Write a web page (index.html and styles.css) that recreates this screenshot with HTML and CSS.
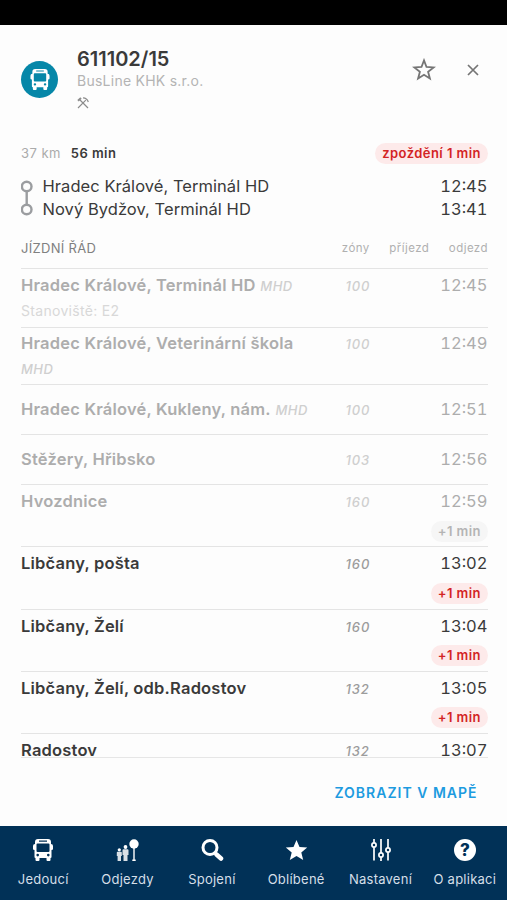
FILE: index.html
```html
<!DOCTYPE html>
<html lang="cs">
<head>
  <meta charset="UTF-8">
  <meta name="viewport" content="width=device-width, initial-scale=1.0">
  <title>611102/15</title>
  <link rel="stylesheet" href="styles.css">
</head>
<body>

<svg class="defs" width="0" height="0">
  <symbol id="bus" viewBox="0 0 20 22">
    <path fill="currentColor" fill-rule="evenodd" d="M5 0h10q3 0 3 3v2q2 0 2 2v3q0 1-1.500 1V18q0 1-1 1v2q0 1-1 1h-2q-1 0-1-1v-2h-7v2q0 1-1 1h-2q-1 0-1-1v-2q-1 0-1-1V11Q0 11 0 10V7q0-2 2-2V3q0-3 3-3zM6 1.500v1.200h8V1.500zM4.500 4.500q-1 0-1 1V12q0 1 1 1h11q1 0 1-1V5.500q0-1-1-1zM4.700 14.800a1.300 1.300 0 1 0 0 2.600a1.300 1.300 0 1 0 0-2.600zM15.300 14.800a1.300 1.300 0 1 0 0 2.600a1.300 1.300 0 1 0 0-2.600z"/>
  </symbol>
</svg>

<div class="statusbar"></div>

<main class="detail">
  <header class="head">
    <div class="logo"><svg width="20" height="21"><use href="#bus"/></svg></div>
    <div class="titles">
      <h1>611102/15</h1>
      <div class="carrier">BusLine KHK s.r.o.</div>
      <svg class="hammers" width="12" height="12" viewBox="0 0 12 12" fill="none" stroke="currentColor" stroke-width="1.200">
        <path d="M3 3l8 8M8.800 3.200L1 11"/>
        <path d="M1 3.800L4 1" stroke-width="2"/>
        <path d="M6 .8q4 0 5.300 4.200"/>
      </svg>
    </div>
    <div class="actions">
      <svg width="24" height="24" viewBox="0 0 24 24" fill="none" stroke="currentColor" stroke-width="1.800">
        <path d="M12 2.400l2.500 6.600 7.100.4-5.500 4.400 1.800 6.800-5.900-3.800-5.900 3.800 1.800-6.800L2.400 9.400l7.100-.4z"/>
      </svg>
      <svg width="12" height="12" viewBox="0 0 12 12" fill="none" stroke="currentColor" stroke-width="1.700">
        <path d="M1 1l10 10M11 1L1 11"/>
      </svg>
    </div>
  </header>

  <div class="summary">
    <span class="km">37 km</span>
    <span class="min">56 min</span>
    <span class="badge late">zpoždění 1 min</span>
  </div>

  <div class="route">
    <svg width="14" height="38" viewBox="0 0 14 38" fill="none" stroke="#9b9da0" stroke-width="2.400">
      <circle cx="5.700" cy="7.500" r="4.800"/>
      <circle cx="5.700" cy="30.500" r="4.800"/>
      <path d="M5.700 12.500v13"/>
    </svg>
    <div class="ends">
      <div class="end"><span>Hradec Králové, Terminál HD</span><span class="time">12:45</span></div>
      <div class="end"><span>Nový Bydžov, Terminál HD</span><span class="time">13:41</span></div>
    </div>
  </div>

  <div class="table-head">
    <span class="caption">JÍZDNÍ ŘÁD</span>
    <span class="col-zone">zóny</span>
    <span class="col-arr">příjezd</span>
    <span class="col-dep">odjezd</span>
  </div>

  <div class="stops">
    <div class="stop past double">
      <div class="name"><b>Hradec Králové, Terminál HD</b> <i>MHD</i><div class="stand">Stanoviště: E2</div></div>
      <div class="zone">100</div>
      <div class="dep"><span class="time">12:45</span></div>
    </div>
    <div class="stop past double short">
      <div class="name"><b>Hradec Králové, Veterinární škola</b> <i>MHD</i></div>
      <div class="zone">100</div>
      <div class="dep"><span class="time">12:49</span></div>
    </div>
    <div class="stop past single">
      <div class="name"><b>Hradec Králové, Kukleny, nám.</b> <i>MHD</i></div>
      <div class="zone">100</div>
      <div class="dep"><span class="time">12:51</span></div>
    </div>
    <div class="stop past single">
      <div class="name"><b>Stěžery, Hřibsko</b></div>
      <div class="zone">103</div>
      <div class="dep"><span class="time">12:56</span></div>
    </div>
    <div class="stop past">
      <div class="name"><b>Hvozdnice</b></div>
      <div class="zone">160</div>
      <div class="dep"><span class="time">12:59</span><span class="badge">+1 min</span></div>
    </div>
    <div class="stop">
      <div class="name"><b>Libčany, pošta</b></div>
      <div class="zone">160</div>
      <div class="dep"><span class="time">13:02</span><span class="badge late">+1 min</span></div>
    </div>
    <div class="stop">
      <div class="name"><b>Libčany, Želí</b></div>
      <div class="zone">160</div>
      <div class="dep"><span class="time">13:04</span><span class="badge late">+1 min</span></div>
    </div>
    <div class="stop">
      <div class="name"><b>Libčany, Želí, odb.Radostov</b></div>
      <div class="zone">132</div>
      <div class="dep"><span class="time">13:05</span><span class="badge late">+1 min</span></div>
    </div>
    <div class="stop last">
      <div class="name"><b>Radostov</b></div>
      <div class="zone">132</div>
      <div class="dep"><span class="time">13:07</span></div>
    </div>
  </div>

  <div class="map-link"><a>ZOBRAZIT V MAPĚ</a></div>
</main>

<nav class="tabs">
  <div class="tab">
    <svg width="20" height="22"><use href="#bus"/></svg>
    <span>Jedoucí</span>
  </div>
  <div class="tab">
    <svg width="24" height="24" viewBox="0 0 24 24" fill="currentColor">
      <circle cx="19" cy="6" r="4.700"/>
      <path d="M18.300 10h1.400v11.500h1v1.500h-3.400v-1.500h1z"/>
      <circle cx="10.500" cy="9" r="1.900"/>
      <path opacity=".85" d="M8.500 11.200h4q1 0 1 1V17h-1v6H8.500v-6h-1v-4.800q0-1 1-1z"/>
      <circle cx="4.300" cy="11.800" r="1.600"/>
      <path opacity=".85" d="M2.600 13.700H6q.8 0 .8.800V18H6v5H2.600v-5h-.8v-3.500q0-.8.800-.8z"/>
    </svg>
    <span>Odjezdy</span>
  </div>
  <div class="tab">
    <svg width="24" height="24" viewBox="0 0 24 24" fill="none" stroke="currentColor">
      <circle cx="10" cy="9.500" r="7" stroke-width="3"/>
      <path d="M14.500 14.500l2 2" stroke-width="3"/>
      <path d="M16.500 16.500l4.500 4" stroke-width="4.500" stroke-linecap="round"/>
    </svg>
    <span>Spojení</span>
  </div>
  <div class="tab">
    <svg width="24" height="24" viewBox="0 0 24 24" fill="currentColor">
      <path d="M12.500 2l3 7 7.700.6-5.900 5 1.900 7.500-6.700-4.100-6.700 4.100 1.900-7.500-5.900-5 7.700-.6z"/>
    </svg>
    <span>Oblíbené</span>
  </div>
  <div class="tab">
    <svg width="24" height="24" viewBox="0 0 24 24" fill="none" stroke="currentColor" stroke-width="1.700">
      <path d="M6 1v3.700M6 9.300V22.500M13 1v13.700M13 19.300v3.700M20 1v8.700M20 14.300v8.200"/>
      <circle cx="6" cy="7" r="2.100"/>
      <circle cx="13" cy="17" r="2.100"/>
      <circle cx="20" cy="12" r="2.100"/>
    </svg>
    <span>Nastavení</span>
  </div>
  <div class="tab">
    <div class="help">?</div>
    <span>O aplikaci</span>
  </div>
</nav>

</body>
</html>
```
FILE: styles.css
```css
* {
  box-sizing: border-box;
}

body {
  margin: 0;
  height: 900px;
  display: flex;
  flex-direction: column;
  overflow: hidden;
  background-color: #fdfdfd;
  color: #3a3a3a;
  font-family: Inter, "Liberation Sans", sans-serif;
  font-size: 16.500px;
}

.defs {
  position: absolute;
}

svg {
  flex: none;
}

.statusbar {
  height: 25px;
  background-color: #000;
}

.detail {
  height: 801px;
  padding: 0 19px 0 21px;
}

.head {
  display: flex;
  height: 115px;
  padding-top: 22px;
}

.logo {
  display: flex;
  align-items: center;
  justify-content: center;
  width: 37px;
  height: 37px;
  margin-top: 14px;
  border-radius: 50%;
  background-color: #0687a8;
  color: #fff;
}

.titles {
  flex: 1;
  margin-left: 19px;
}

h1 {
  margin: 0;
  font-size: 20px;
  line-height: 24px;
  font-weight: 600;
}

.carrier {
  font-size: 14px;
  line-height: 20px;
  letter-spacing: 0.25px;
  color: #b4b4b4;
}

.hammers {
  display: block;
  margin-top: 6px;
  color: #8c8c8c;
}

.actions {
  display: flex;
  align-items: center;
  height: 45px;
  gap: 31px;
  margin-right: 9px;
  color: #757575;
}

.summary {
  display: flex;
  align-items: center;
  height: 27px;
  font-size: 13px;
  letter-spacing: 0.45px;
}

.km,
.min {
  margin-top: -2px;
}

.km {
  color: #ababab;
}

.min {
  margin-left: 10px;
  font-weight: 600;
}

.badge {
  padding: 0 7px;
  border-radius: 11px;
  background-color: #f6f6f6;
  color: #b4b4b4;
  font-size: 13px;
  line-height: 21px;
  font-weight: 600;
  letter-spacing: 0.45px;
}

.badge.late {
  background-color: #fdeaea;
  color: #d32424;
}

.summary .badge {
  margin-left: auto;
}

.route {
  display: flex;
  height: 61px;
  padding-top: 8px;
}

.route svg {
  margin-top: 4px;
}

.ends {
  flex: 1;
  margin-left: 7.500px;
}

.end {
  display: flex;
  justify-content: space-between;
  line-height: 23px;
  letter-spacing: 0.05px;
}

.time {
  margin-right: 0.500px;
  font-size: 16.500px;
  letter-spacing: 0;
  font-variant-numeric: tabular-nums;
}

.table-head {
  display: flex;
  align-items: center;
  height: 41px;
  border-bottom: 1px solid #e4e4e4;
  color: #b0b0b0;
  font-size: 11.500px;
  letter-spacing: 0.45px;
}

.caption {
  flex: 1;
  color: #808080;
  font-size: 13px;
  letter-spacing: 0.3px;
}

.col-arr,
.col-dep {
  margin-left: 19.500px;
}

.stops {
  height: 489px;
  overflow: hidden;
  border-bottom: 1px solid #e6e6e6;
}

.stop {
  display: flex;
  height: 62.300px;
  padding-top: 4px;
  border-bottom: 1px solid #e4e4e4;
  line-height: 25px;
}

.stop.double {
  height: 59px;
}

.stop.short {
  height: 57px;
  padding-top: 3px;
}

.stop.single {
  height: 50px;
  align-items: center;
  padding-top: 0;
}

.stop.last {
  padding-top: 6px;
  border-bottom: 0;
  line-height: 20px;
}

.name {
  width: 300px;
}

.name b {
  font-weight: 600;
  letter-spacing: 0.2px;
}

.name i {
  color: #cfcfcf;
  font-size: 13px;
  font-weight: 500;
  letter-spacing: 0.5px;
}

.stand {
  margin-top: -1px;
  color: #d8d8d8;
  font-size: 14px;
  letter-spacing: 0.3px;
}

.zone {
  width: 74px;
  padding: 1px 0 0 24.500px;
  color: #9c9c9c;
  font-size: 13px;
  font-style: italic;
  font-weight: 500;
  letter-spacing: 0.9px;
}

.dep {
  flex: 1;
  display: flex;
  flex-direction: column;
  align-items: flex-end;
}

.dep .badge {
  margin-top: 6.500px;
}

.past {
  color: #adadad;
}

.past .zone {
  color: #cfcfcf;
}

.map-link {
  display: flex;
  justify-content: flex-end;
  align-items: center;
  height: 68px;
  padding-right: 10.500px;
  color: #1d9be0;
  font-size: 14px;
  font-weight: 600;
  letter-spacing: 1px;
}

.tabs {
  display: grid;
  grid-template-columns: repeat(6, 1fr);
  height: 74px;
  padding: 12px 0 0 1px;
  background-color: #013157;
  color: #fff;
}

.tab {
  display: flex;
  flex-direction: column;
  align-items: center;
}

.tab svg {
  height: 24px;
}

.tab span {
  margin-top: 7px;
  color: #d5dfe8;
  font-size: 13px;
  line-height: 20px;
  letter-spacing: 0.25px;
  white-space: nowrap;
}

.help {
  width: 22px;
  height: 22px;
  margin: 1px 0;
  border-radius: 50%;
  background-color: #fff;
  color: #013157;
  font-size: 17px;
  line-height: 22px;
  font-weight: 800;
  text-align: center;
}
```
